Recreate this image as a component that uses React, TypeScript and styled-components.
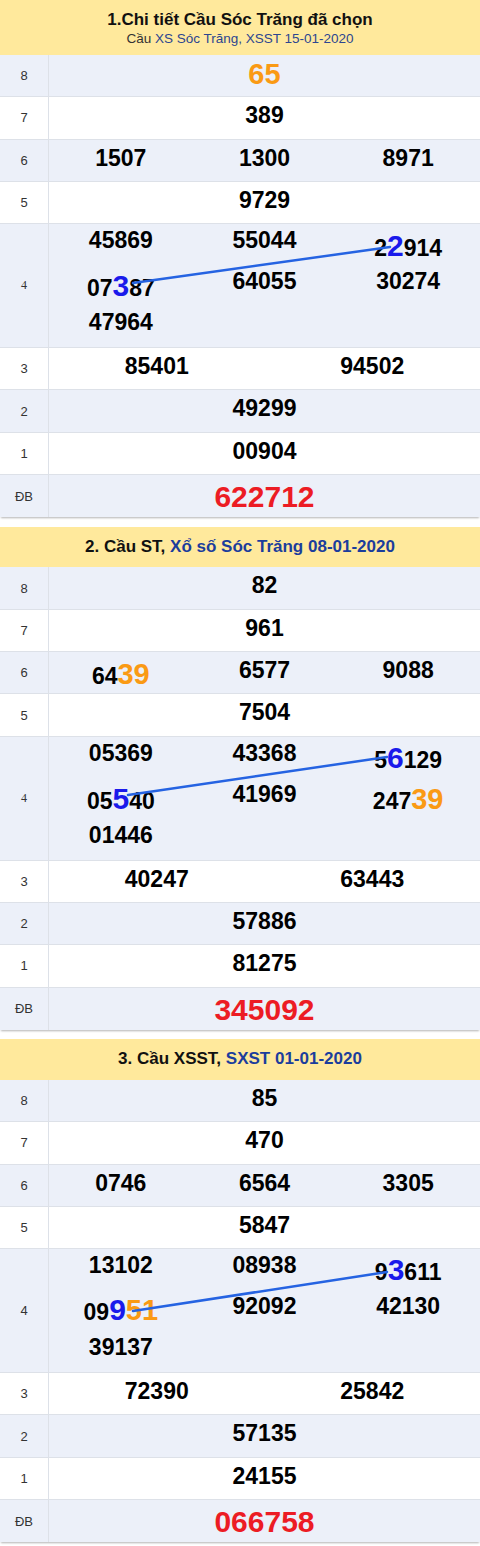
import React from "react";
import styled, { createGlobalStyle } from "styled-components";

const GlobalStyle = createGlobalStyle`
  html, body { margin: 0; padding: 0; background: #ffffff; }
  body { font-family: "Liberation Sans", Arial, sans-serif; }
`;

type Tone = "blue" | "orange";
type Part = { text: string; tone?: Tone };
type Item = { raw: string; drop?: number };
type RowData = { label: string; cols: number; items: Item[]; special?: boolean; serif?: boolean };
type Link = { x1: number; y1: number; x2: number; y2: number };
type Board = {
  tall?: boolean;
  lead: string;
  linkText: string;
  sub?: { lead: string; linkText: string };
  rows: RowData[];
  link: Link;
};

// "[x]" = big blue digits, "{x}" = big orange digits
const parse = (raw: string): Part[] => {
  const parts: Part[] = [];
  const re = /\[([^\]]+)\]|\{([^}]+)\}|([^[{]+)/g;
  let m: RegExpExecArray | null;
  while ((m = re.exec(raw))) {
    if (m[1]) parts.push({ text: m[1], tone: "blue" });
    else if (m[2]) parts.push({ text: m[2], tone: "orange" });
    else parts.push({ text: m[3] });
  }
  return parts;
};

const n = (raw: string, drop?: number): Item => ({ raw, drop });

const boards: Board[] = [
  {
    tall: true,
    lead: "1.Chi tiết Cầu Sóc Trăng đã chọn",
    linkText: "",
    sub: { lead: "Cầu ", linkText: "XS Sóc Trăng, XSST 15-01-2020" },
    rows: [
      { label: "8", cols: 1, items: [n("{65}", 3)] },
      { label: "7", cols: 1, items: [n("389")] },
      { label: "6", cols: 3, items: [n("1507"), n("1300"), n("8971")] },
      { label: "5", cols: 1, items: [n("9729")] },
      {
        label: "4",
        cols: 3,
        serif: true,
        items: [n("45869"), n("55044"), n("2[2]914", 8), n("07[3]87", 7), n("64055"), n("30274"), n("47964")],
      },
      { label: "3", cols: 2, items: [n("85401"), n("94502")] },
      { label: "2", cols: 1, items: [n("49299")] },
      { label: "1", cols: 1, items: [n("00904")] },
      { label: "ĐB", cols: 1, special: true, items: [n("622712", 6)] },
    ],
    link: { x1: 84, y1: 59, x2: 341, y2: 23 },
  },
  {
    lead: "2. Cầu ST, ",
    linkText: "Xổ số Sóc Trăng 08-01-2020",
    rows: [
      { label: "8", cols: 1, items: [n("82")] },
      { label: "7", cols: 1, items: [n("961")] },
      { label: "6", cols: 3, items: [n("64{39}", 6), n("6577"), n("9088")] },
      { label: "5", cols: 1, items: [n("7504")] },
      {
        label: "4",
        cols: 3,
        serif: true,
        items: [n("05369"), n("43368"), n("5[6]129", 7), n("05[5]40", 7), n("41969"), n("247{39}", 7), n("01446")],
      },
      { label: "3", cols: 2, items: [n("40247"), n("63443")] },
      { label: "2", cols: 1, items: [n("57886")] },
      { label: "1", cols: 1, items: [n("81275")] },
      { label: "ĐB", cols: 1, special: true, items: [n("345092", 6)] },
    ],
    link: { x1: 79, y1: 58, x2: 338, y2: 20 },
  },
  {
    lead: "3. Cầu XSST, ",
    linkText: "SXST 01-01-2020",
    rows: [
      { label: "8", cols: 1, items: [n("85")] },
      { label: "7", cols: 1, items: [n("470")] },
      { label: "6", cols: 3, items: [n("0746"), n("6564"), n("3305")] },
      { label: "5", cols: 1, items: [n("5847")] },
      {
        label: "4",
        cols: 3,
        items: [n("13102"), n("08938"), n("9[3]611", 7), n("09[9]{51}", 6), n("92092"), n("42130"), n("39137")],
      },
      { label: "3", cols: 2, items: [n("72390"), n("25842")] },
      { label: "2", cols: 1, items: [n("57135")] },
      { label: "1", cols: 1, items: [n("24155")] },
      { label: "ĐB", cols: 1, special: true, items: [n("066758", 6)] },
    ],
    link: { x1: 84, y1: 62, x2: 338, y2: 23 },
  },
];

const Page = styled.main`
  width: 480px;
`;

const Section = styled.section`
  margin-bottom: 9.6px;
  box-shadow: 0 2px 2px -1px rgba(0, 0, 0, 0.3);
`;

const Header = styled.header<{ $tall?: boolean }>`
  background: #ffe99c;
  height: ${(p) => (p.$tall ? 55 : 40.5)}px;
  box-sizing: border-box;
  padding-top: 10px;
  text-align: center;
`;

const Title = styled.h2`
  margin: 0;
  font-size: 17px;
  line-height: 20px;
  font-weight: bold;
  color: #111111;
`;

const TitleLink = styled.span`
  color: #1b3d9c;
`;

const Sub = styled.div`
  margin-top: 1px;
  font-size: 13.5px;
  line-height: 16px;
  color: #333333;
`;

const SubLink = styled.span`
  color: #2c4690;
`;

const Row = styled.div<{ $alt: boolean; $tall: boolean }>`
  display: grid;
  grid-template-columns: 49px 1fr;
  height: ${(p) => (p.$tall ? 124 : 42.3)}px;
  box-sizing: border-box;
  background: ${(p) => (p.$alt ? "#ecf0f9" : "#ffffff")};
  border-bottom: 1px solid #dde1e8;
  &:last-child {
    border-bottom: none;
  }
`;

const Label = styled.div<{ $serif?: boolean }>`
  display: flex;
  align-items: center;
  justify-content: center;
  border-right: 1px solid #dde1e8;
  font-family: ${(p) =>
    p.$serif ? '"Liberation Serif", "Times New Roman", serif' : '"Liberation Sans", Arial, sans-serif'};
  font-size: ${(p) => (p.$serif ? 12 : 13)}px;
  color: #333333;
`;

const Cell = styled.div<{ $cols: number; $tall: boolean }>`
  position: relative;
  display: grid;
  grid-template-columns: repeat(${(p) => p.$cols}, 1fr);
  grid-auto-rows: 41px;
  margin-top: ${(p) => (p.$tall ? -2 : 0)}px;
`;

const Num = styled.div<{ $drop: number }>`
  height: 41px;
  box-sizing: border-box;
  padding-top: ${(p) => p.$drop}px;
  text-align: center;
  white-space: nowrap;
  font-size: 23px;
  line-height: 36px;
  font-weight: bold;
  color: #000000;
`;

const Big = styled.span<{ $tone: Tone }>`
  font-size: ${(p) => (p.$tone === "blue" ? 30 : 29)}px;
  line-height: 0;
  color: ${(p) => (p.$tone === "blue" ? "#1a1aeb" : "#fa9a14")};
`;

const Special = styled.span`
  font-size: 30px;
  line-height: 0;
  color: #ec1c24;
`;

const Overlay = styled.svg`
  position: absolute;
  left: 0;
  top: 0;
  width: 100%;
  height: 100%;
  overflow: visible;
  pointer-events: none;
`;

const NumberItem: React.FC<{ item: Item; special?: boolean }> = ({ item, special }) => {
  const parts = parse(item.raw);
  const drop = item.drop ?? 0;
  if (special) {
    return (
      <Num $drop={drop}>
        <Special>{item.raw}</Special>
      </Num>
    );
  }
  return (
    <Num $drop={drop}>
      {parts.map((p, i) =>
        p.tone ? (
          <Big key={i} $tone={p.tone}>
            {p.text}
          </Big>
        ) : (
          <React.Fragment key={i}>{p.text}</React.Fragment>
        )
      )}
    </Num>
  );
};

const BoardView: React.FC<{ board: Board }> = ({ board }) => (
  <Section>
    <Header $tall={board.tall}>
      <Title>
        {board.lead}
        {board.linkText && <TitleLink>{board.linkText}</TitleLink>}
      </Title>
      {board.sub && (
        <Sub>
          {board.sub.lead}
          <SubLink>{board.sub.linkText}</SubLink>
        </Sub>
      )}
    </Header>
    {board.rows.map((row, ri) => {
      const tall = row.items.length > 3;
      return (
        <Row key={row.label} $alt={ri % 2 === 0} $tall={tall}>
          <Label $serif={row.serif}>{row.label}</Label>
          <Cell $cols={row.cols} $tall={tall}>
            {row.items.map((item, ii) => (
              <NumberItem key={ii} item={item} special={row.special} />
            ))}
            {tall && (
              <Overlay>
                <line
                  x1={board.link.x1}
                  y1={board.link.y1 + 2}
                  x2={board.link.x2}
                  y2={board.link.y2 + 2}
                  stroke="#2563e2"
                  strokeWidth={2.5}
                  strokeLinecap="round"
                />
              </Overlay>
            )}
          </Cell>
        </Row>
      );
    })}
  </Section>
);

export default function App() {
  return (
    <Page>
      <GlobalStyle />
      {boards.map((b, i) => (
        <BoardView key={i} board={b} />
      ))}
    </Page>
  );
}
